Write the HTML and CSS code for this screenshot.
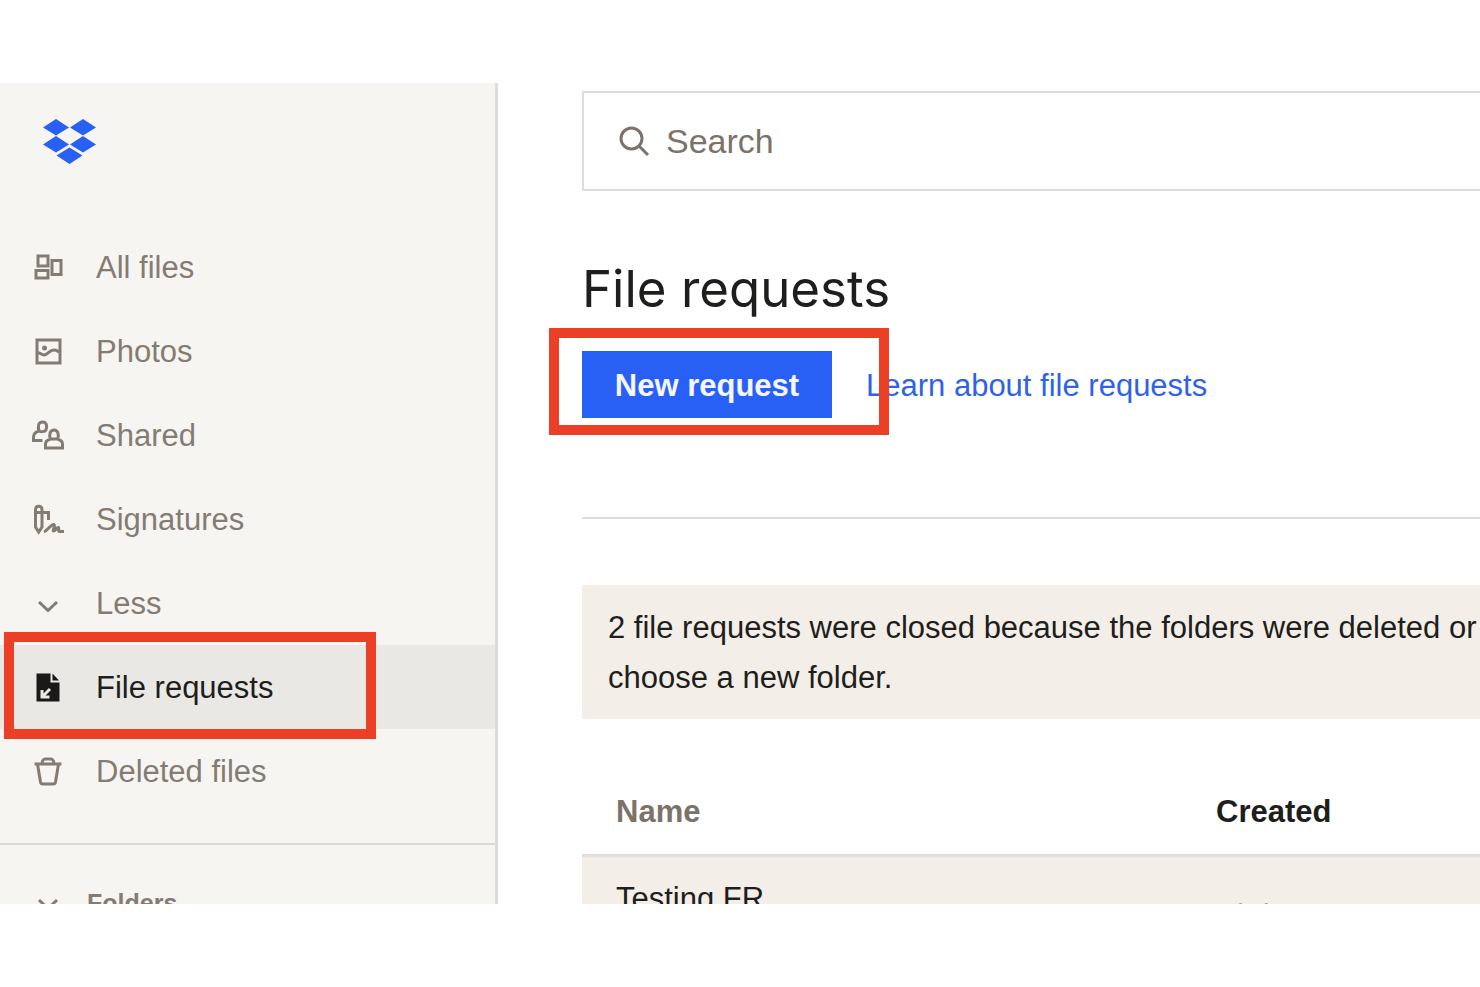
FILE: index.html
```html
<!DOCTYPE html>
<html lang="en">
  <head>
    <meta charset="UTF-8" />
    <meta name="viewport" content="width=device-width, initial-scale=1.0" />
    <title>File requests</title>
    <link rel="stylesheet" href="styles.css">
  </head>
  <body>
    <div class="screen">
      <!-- Sidebar -->
      <aside class="sidebar">
        <a class="logo" href="#" aria-label="Home">
          <svg width="54" height="46" viewBox="0 0 54 46">
            <path d="M14 0 27 8.500 14 16.500 1 8.500zM41 0 54 8.500 41 16.500 28 8.500zM14 17 27 25.500 14 33.500 1 25.500zM41 17 54 25.500 41 33.500 28 25.500zM27.500 28.500 40.500 36.500 27.500 45 14.500 36.500z" fill="#2860f6" />
          </svg>
        </a>

        <nav class="nav">
          <a class="nav-item" href="#">
            <svg class="icon" viewBox="0 0 32 32">
              <path d="M6 4h10v10H6zM4 18.500h12v7.500H4zM20 8.500h9v14h-9z" />
            </svg>
            All files
          </a>
          <a class="nav-item" href="#">
            <svg class="icon" viewBox="0 0 32 32">
              <path d="M5 4h23v23H5zM5 17c3-1 4 2 7 2 4 0 5-5 10-5 3 0 4 2 6 2" />
              <circle class="dot" cx="12.500" cy="12" r="2.500" />
            </svg>
            Photos
          </a>
          <a class="nav-item" href="#">
            <svg class="icon" viewBox="0 0 32 32">
              <path d="M10.500 20.500h-9V17c0-3 2-5 5.500-6-1.500-5-.5-9 3.500-9s5 4 3.500 8c-1 2-6 2-7 1M13.500 28v-4c0-3 2-4 5-5-2-5 0-9 3.500-9s5.500 4 3.500 9c3 1 5 2 5 5v4zM18 19h8" />
            </svg>
            Shared
          </a>
          <a class="nav-item" href="#">
            <svg class="icon" viewBox="0 0 32 32">
              <path d="M3.500 23V6c0-5 6.500-5 6.500 0v17l-3.300 5zM3.500 8.500h13V16M12 28c4-2 7-8 10-7.500 2 1-2 6-.5 6.500 2 0 3-4 5-3.500 1 1-1 4 1 4H32" />
            </svg>
            Signatures
          </a>
          <a class="nav-item" href="#">
            <svg class="icon" viewBox="0 0 32 32">
              <path d="m7 14 9 8.500 9-8.500" />
            </svg>
            Less
          </a>
          <a class="nav-item active" href="#">
            <svg class="icon" viewBox="0 0 32 32">
              <path class="fill" d="M4.500 1.500h14v9h9v19h-23zM20.500 1.500l6.500 7h-6.500z" />
              <path class="arrow" d="m18 17-8 8M10 18v7h7.500" />
            </svg>
            File requests
            <span class="callout callout-nav"></span>
          </a>
          <a class="nav-item" href="#">
            <svg class="icon" viewBox="0 0 32 32">
              <path d="M2.500 8h27M5.500 8l3 18c.3 1.500 1 2 2.500 2h10c1.500 0 2.200-.5 2.500-2l3-18M10 8c0-2 1-5 3-5h6c2 0 3 3 3 5" />
            </svg>
            Deleted files
          </a>
        </nav>

        <div class="folders">
          <svg class="icon" viewBox="0 0 32 32">
            <path d="m7 13 9 8.500 9-8.500" />
          </svg>
          Folders
        </div>
      </aside>

      <!-- Main content -->
      <main class="main">
        <label class="search">
          <svg class="search-icon" viewBox="0 0 32 32">
            <circle cx="13.500" cy="13.500" r="10.500" />
            <path d="m21 21 9 9" />
          </svg>
          <input type="search" placeholder="Search" aria-label="Search" />
        </label>

        <h1 class="title">File requests</h1>

        <div class="actions">
          <div class="primary">
            <button class="button" type="button">New request</button>
            <span class="callout callout-button"></span>
          </div>
          <a class="link" href="#">Learn about file requests</a>
        </div>

        <div class="notice">
          2 file requests were closed because the folders were deleted or<br />
          choose a new folder.
        </div>

        <table class="requests">
          <thead>
            <tr>
              <th class="name">Name</th>
              <th class="created">Created</th>
            </tr>
          </thead>
          <tbody>
            <tr>
              <td>Testing FR</td>
              <td class="date">4/1/2022</td>
            </tr>
          </tbody>
        </table>
      </main>
    </div>
  </body>
</html>
```

FILE: styles.css
```css
* {
  box-sizing: border-box;
}

body {
  margin: 0;
  padding: 83px 0;
  background: #fff;
  color: #1e1e1c;
  font-family: "Liberation Sans", Arial, sans-serif;
  font-size: 31px;
}

a {
  text-decoration: none;
}

.screen {
  display: flex;
  height: calc(100vh - 166px);
  overflow: hidden;
}

/* Sidebar */
.sidebar {
  flex: 0 0 498px;
  background: #f6f5f1;
  border-right: 3px solid #dddcda;
  color: #847c73;
}

.logo {
  display: block;
  height: 142px;
  padding: 36px 42px;
}

.nav {
  padding-bottom: 30px;
  border-bottom: 2px solid #dad9d5;
}

.nav-item {
  position: relative;
  display: flex;
  align-items: center;
  gap: 32px;
  height: 84px;
  padding-top: 2px;
  padding-left: 32px;
  color: #847c73;
}

.nav-item.active {
  background: #e9e8e4;
  color: #1e1e1c;
}

.icon {
  flex: none;
  width: 32px;
  height: 32px;
  fill: none;
  stroke: #847c73;
  stroke-width: 3;
}

.icon .dot {
  fill: #847c73;
  stroke: none;
}

.icon .fill {
  fill: #1a1918;
  stroke: none;
}

.icon .arrow {
  stroke: #e9e8e4;
}

.folders {
  display: flex;
  align-items: center;
  gap: 23px;
  padding: 42px 32px;
  font-size: 25px;
  font-weight: bold;
}

/* Red frames drawn over the page */
.callout {
  position: absolute;
  border: 10px solid #eb4026;
  pointer-events: none;
}

.callout-nav {
  top: -13px;
  left: 4px;
  width: 372px;
  height: 107px;
}

.callout-button {
  top: -23px;
  right: -57px;
  bottom: -17px;
  left: -33px;
  z-index: 1;
}

/* Main */
.main {
  flex: 1;
  min-width: 0;
  padding: 8px 0 0 84px;
  white-space: nowrap;
}

.search {
  display: flex;
  align-items: center;
  gap: 16px;
  height: 100px;
  padding-left: 34px;
  border: 2px solid #dddddc;
  border-right: 0;
}

.search-icon {
  flex: none;
  width: 32px;
  height: 32px;
  fill: none;
  stroke: #7b736a;
  stroke-width: 3;
}

.search input {
  flex: 1;
  min-width: 0;
  padding: 0;
  border: 0;
  outline: 0;
  background: none;
  font: inherit;
  font-size: 34px;
}

.search input::placeholder {
  color: #7b736a;
  opacity: 1;
}

.title {
  margin: 68px 0 32px;
  font-family: Inter, sans-serif;
  font-size: 51px;
  font-weight: normal;
  line-height: 60px;
}

.actions {
  display: flex;
  align-items: center;
  gap: 34px;
  padding-bottom: 99px;
  border-bottom: 2px solid #dddddc;
}

.primary {
  position: relative;
}

.button {
  display: block;
  width: 250px;
  height: 67px;
  padding: 2px 0 0;
  border: 0;
  background: #2860f6;
  color: #f4f6ff;
  font: inherit;
  font-weight: bold;
}

.link {
  padding-top: 2px;
  color: #2f62e8;
}

.notice {
  margin-top: 66px;
  padding: 18px 26px 16px;
  background: #f3eee8;
  line-height: 50px;
}

.requests {
  width: 100%;
  margin-top: 50px;
  border-collapse: collapse;
  table-layout: fixed;
}

.requests th,
.requests td {
  padding: 0 34px;
  text-align: left;
}

.requests th {
  height: 86px;
  padding-top: 2px;
  border-bottom: 3px solid #dededc;
}

.requests .name {
  width: 600px;
  color: #7b736a;
}

.requests td {
  height: 86px;
  background: #f3eee8;
}

.requests .date {
  padding-top: 35px;
  color: #a39c94;
}
```
